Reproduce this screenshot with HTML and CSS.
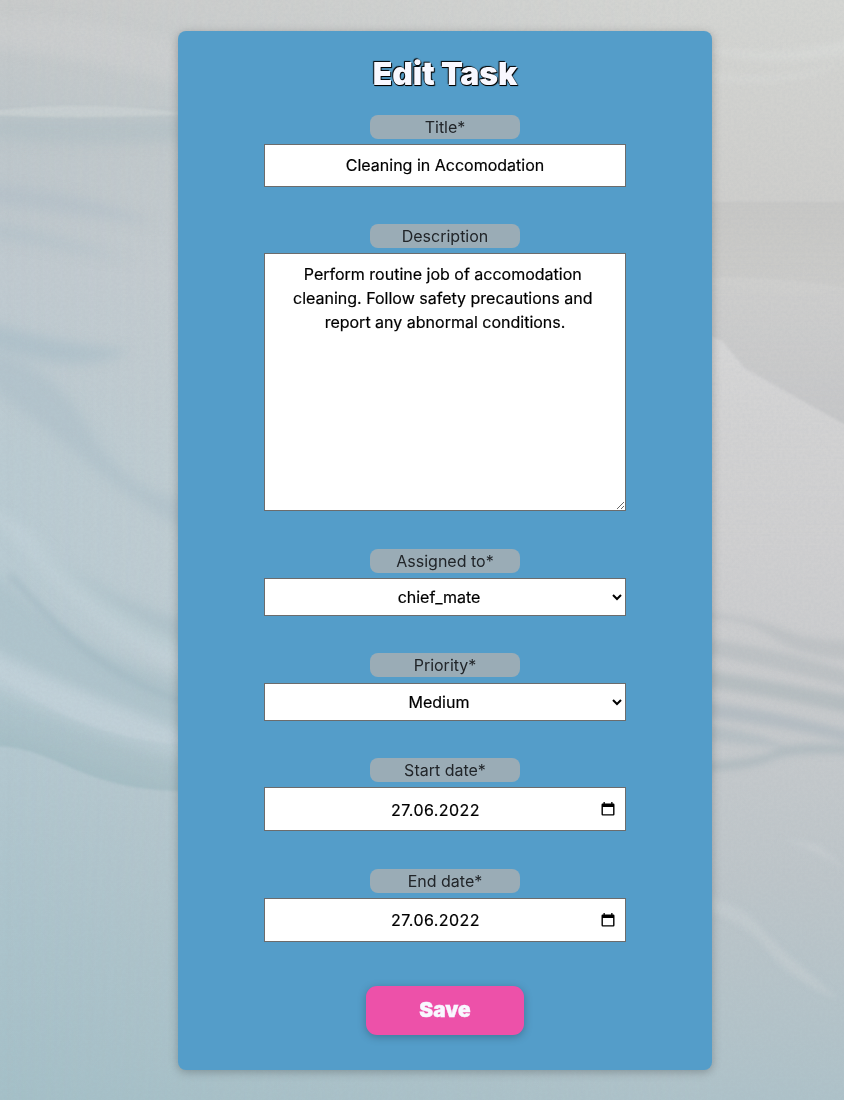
FILE: index.html
```html
<!DOCTYPE html>
<html lang="en">
<head>
<meta charset="utf-8">
<title>Edit Task</title>
<link rel="stylesheet" href="styles.css">
</head>
<body>
<svg class="backdrop" viewBox="0 0 844 1100" preserveAspectRatio="none" aria-hidden="true">
  <defs>
    <linearGradient id="cool" x1="0" y1="0" x2="0" y2="1">
      <stop offset="0" stop-color="#c9cbcb"/>
      <stop offset=".11" stop-color="#bdc6ca"/>
      <stop offset=".25" stop-color="#c0cad0"/>
      <stop offset=".42" stop-color="#bacbd2"/>
      <stop offset=".6" stop-color="#b8cbd3"/>
      <stop offset=".75" stop-color="#b0c6ce"/>
      <stop offset="1" stop-color="#a5c0c8"/>
    </linearGradient>
    <linearGradient id="warm" x1="0" y1="0" x2="0" y2="1">
      <stop offset="0" stop-color="#d4d5d2"/>
      <stop offset=".18" stop-color="#cececc"/>
      <stop offset=".5" stop-color="#cfcfd0"/>
      <stop offset=".62" stop-color="#c9cbcd"/>
      <stop offset=".8" stop-color="#bdc5c9"/>
      <stop offset="1" stop-color="#aec2c9"/>
    </linearGradient>
    <linearGradient id="fade"><stop offset="0" stop-color="#000"/><stop offset=".85" stop-color="#fff"/></linearGradient>
    <mask id="right"><rect width="844" height="1100" fill="url(#fade)"/></mask>
    <linearGradient id="dune" gradientUnits="userSpaceOnUse" x1="0" y1="350" x2="0" y2="560">
      <stop offset="0" stop-color="#dadadb" stop-opacity=".6"/><stop offset="1" stop-color="#d4d4d6" stop-opacity="0"/>
    </linearGradient>
    <linearGradient id="shade" gradientUnits="userSpaceOnUse" x1="0" y1="285" x2="0" y2="420">
      <stop offset="0" stop-color="#c4c5c7" stop-opacity=".1"/><stop offset="1" stop-color="#c2c3c5" stop-opacity=".7"/>
    </linearGradient>
    <linearGradient id="horizon" gradientUnits="userSpaceOnUse" x1="0" y1="202" x2="0" y2="290">
      <stop offset="0" stop-color="#c3c3c1" stop-opacity=".6"/><stop offset="1" stop-color="#c3c3c1" stop-opacity=".3"/>
    </linearGradient>
    <linearGradient id="valley" gradientUnits="userSpaceOnUse" x1="60" y1="690" x2="40" y2="755">
      <stop offset="0" stop-color="#9db9c1" stop-opacity="0"/><stop offset="1" stop-color="#9bb7be" stop-opacity=".6"/>
    </linearGradient>
    <filter id="b1" x="-20%" y="-50%" width="140%" height="200%"><feGaussianBlur stdDeviation="1"/></filter>
    <filter id="b3" x="-20%" y="-50%" width="140%" height="200%"><feGaussianBlur stdDeviation="3"/></filter>
    <filter id="b6" x="-20%" y="-50%" width="140%" height="200%"><feGaussianBlur stdDeviation="6"/></filter>
    <filter id="grain" x="0" y="0" width="100%" height="100%">
      <feTurbulence type="fractalNoise" baseFrequency=".35" numOctaves="2" seed="4"/>
      <feColorMatrix values="0 0 0 0 .4  0 0 0 0 .45  0 0 0 0 .5  .5 0 0 0 -.19"/>
    </filter>
  </defs>
  <rect width="844" height="1100" fill="url(#cool)"/>
  <rect width="844" height="1100" fill="url(#warm)" mask="url(#right)"/>
  <!-- left side: sky streaks and slopes -->
  <g filter="url(#b6)">
    <path d="M-20 20Q80 10 200 50V90Q100 60 -20 45Z" fill="#d3d5d5" opacity=".35"/>
    <path d="M-20 118H200V140Q90 150 -20 136Z" fill="#b1bfc5" opacity=".6"/>
    <path d="M-20 184Q80 188 160 225Q70 215 -20 202Z" fill="#b0bec7" opacity=".5"/>
    <path d="M-20 220Q60 232 130 262Q50 248 -20 236Z" fill="#b0bec7" opacity=".45"/>
    <path d="M-20 320Q60 345 130 350Q80 380 -20 343Z" fill="#a6bcc6" opacity=".6"/>
    <path d="M-20 350Q50 360 90 430T200 500V540Q130 500 90 465T-20 380Z" fill="#a9bec7" opacity=".5"/>
    <path d="M20 530Q100 600 200 625V660Q110 640 20 530Z" fill="#a7bdc5" opacity=".6"/>
    <path d="M-20 560Q60 650 200 685V740Q90 700 -20 640Z" fill="#a9bfc8" opacity=".6"/>
    <path d="M-20 500Q90 640 200 680V650Q100 610 30 530Z" fill="#c8d6de" opacity=".45"/>
    <path d="M-20 650Q80 690 200 738V765Q90 740 -20 680Z" fill="#c5d4db" opacity=".65"/>
  </g>
  <g filter="url(#b3)" fill="none">
    <path d="M10 575C70 640 100 675 200 708" stroke="#9db5bf" stroke-width="7" opacity=".5"/>
  </g>
  <g filter="url(#b1)">
    <path d="M-10 111Q90 99 190 114Q90 120 -10 115Z" fill="#cbd1d3" opacity=".75"/>
    <path d="M-10 746C60 745 75 792 190 791V745Q80 740 -10 670Z" fill="url(#valley)"/>
  </g>
  <!-- right side: horizon, dune and ripples -->
  <g filter="url(#b1)">
    <path d="M700 202H860V290Q780 275 700 278Z" fill="url(#horizon)"/>
    <path d="M700 281Q780 303 860 285V433L745 371L722 343L700 330Z" fill="url(#shade)"/>
    <path d="M700 331L722 341L745 368L860 433V560H700Z" fill="url(#dune)"/>
  </g>
  <g filter="url(#b3)">
    <path d="M690 610Q755 617 785 630T860 640V660Q800 658 770 636T690 620Z" fill="#b9bdc0" opacity=".7"/>
    <path d="M690 637Q770 645 860 675V690Q770 665 690 652Z" fill="#b5bcbe" opacity=".65"/>
    <path d="M690 668Q770 680 860 698V716Q770 695 690 685Z" fill="#b2babd" opacity=".8"/>
    <path d="M690 700Q770 708 860 734V745Q770 723 690 716Z" fill="#b0bac0" opacity=".8"/>
    <path d="M690 725Q745 726 790 748Q740 745 690 738Z" fill="#b0bac0" opacity=".7"/>
    <path d="M690 763Q760 760 775 750T860 746V755Q790 751 770 761T690 772Z" fill="#aeb9be" opacity=".8"/>
    <path d="M690 893Q740 903 756 922T795 961L840 1000Q790 980 768 950T690 905Z" fill="#c8cfd4" opacity=".55"/>
    <path d="M780 838L818 845L850 872L815 852Z" fill="#ccd1d3" opacity=".6"/>
    <path d="M700 44Q770 60 850 38V55Q770 70 700 50ZM700 72Q780 85 850 60Q790 92 700 78Z" fill="#dcdddb" opacity=".45"/>
  </g>
  <rect width="844" height="1100" filter="url(#grain)" opacity=".45"/>
</svg>

<form class="card">
  <h1 class="card-title">Edit Task</h1>
  <div class="field">
    <label class="label" for="title">Title*</label>
    <input class="control text" id="title" type="text" value="Cleaning in Accomodation">
  </div>
  <div class="field field-description">
    <label class="label" for="description">Description</label>
    <textarea class="control area" id="description" spellcheck="false">Perform routine job of accomodation cleaning. Follow safety precautions and report any abnormal conditions.</textarea>
  </div>
  <div class="field field-assigned">
    <label class="label" for="assigned">Assigned to*</label>
    <select class="control choice" id="assigned"><option>chief_mate</option></select>
  </div>
  <div class="field field-priority">
    <label class="label" for="priority">Priority*</label>
    <select class="control choice" id="priority"><option>Medium</option></select>
  </div>
  <div class="field field-start">
    <span class="label">Start date*</span>
    <div class="control date"><span class="date-value">27.06.2022</span>
      <svg class="calendar" viewBox="0 0 14 15"><path d="M2.5 0h1.3v1.5h6.4V0h1.3v1.5h.8q1.2 0 1.2 1.2v9.6q0 1.2-1.2 1.2H1.7Q.5 13.500.5 12.300V2.700Q.5 1.500 1.700 1.500h.8zM1.900 5v7.200h10.200V5z" fill-rule="evenodd"/></svg>
    </div>
  </div>
  <div class="field field-end">
    <span class="label">End date*</span>
    <div class="control date date-end"><span class="date-value">27.06.2022</span>
      <svg class="calendar" viewBox="0 0 14 15"><path d="M2.5 0h1.3v1.5h6.4V0h1.3v1.5h.8q1.2 0 1.2 1.2v9.6q0 1.2-1.2 1.2H1.7Q.5 13.500.5 12.300V2.700Q.5 1.500 1.700 1.500h.8zM1.900 5v7.200h10.200V5z" fill-rule="evenodd"/></svg>
    </div>
  </div>
  <button class="save" type="button">Save</button>
</form>
</body>
</html>
```
FILE: styles.css
```css
* { box-sizing: border-box; }

body {
  margin: 0;
  padding: 31px 132px 30px 178px;
  height: 1100px;
  overflow: hidden;
  font: 16px/24px Inter, sans-serif;
  background: #c0cacf;
}

.backdrop {
  position: fixed;
  inset: 0;
  z-index: -1;
  width: 100%;
  height: 100%;
}

.card {
  display: flex;
  flex-direction: column;
  align-items: center;
  width: 534px;
  height: 1039px;
  padding-top: 24px;
  border-radius: 8px;
  background: #549dc9;
  box-shadow: 0 2px 10px rgba(0, 0, 0, .25);
}

.card-title {
  margin: 0 0 22px;
  height: 38px;
  font-size: 32px;
  line-height: 38px;
  font-weight: 900;
  letter-spacing: -.15px;
  color: ghostwhite;
  text-shadow: 1px 1px 1px #000, -1px -1px 1px #000, 0 1px 0 #000;
}

.field {
  display: flex;
  flex-direction: column;
  align-items: center;
  gap: 5px;
  width: 362px;
}

.field-description { margin-top: 37px; }
.field-assigned { margin-top: 38px; }
.field-priority { margin-top: 37px; gap: 6px; }
.field-start { margin-top: 37px; }
.field-end { margin-top: 38px; }

.label {
  width: 150px;
  height: 24px;
  border-radius: 8px;
  background: #9aacb6;
  color: #212529;
  text-align: center;
}

.control {
  display: block;
  width: 362px;
  height: 43px;
  margin: 0;
  padding: 8px 16px;
  border: 1px solid #6c6c6c;
  border-radius: 0;
  outline: 0;
  background: #fff;
  color: #000;
  font: inherit;
  -webkit-text-stroke: .2px #000;
  text-align: center;
}

.text { padding: 7px 16px 9px; }

.area {
  height: 258px;
  resize: vertical;
  white-space: break-spaces;
}

.choice {
  height: 38px;
  padding: 0;
  text-align-last: center;
}

.date {
  display: flex;
  align-items: center;
  height: 44px;
  padding: 1px 10px 0 16px;
}

.date-end { padding-top: 0; padding-bottom: 1px; }

.date-value {
  flex: 1;
  padding-right: 11px;
  letter-spacing: .45px;
}

.calendar {
  width: 14px;
  height: 15px;
  margin-top: -1px;
}

.date-end .calendar { margin-top: 1px; }

.save {
  width: 158px;
  height: 49px;
  margin-top: 44px;
  padding: 0 0 2px;
  border: 0;
  border-radius: 11px;
  background: #ed51a9;
  color: ghostwhite;
  font: 900 20.8px/24px Inter, sans-serif;
  -webkit-text-stroke: .4px ghostwhite;
  box-shadow: 0 2px 8px rgba(0, 0, 0, .25);
}
```
